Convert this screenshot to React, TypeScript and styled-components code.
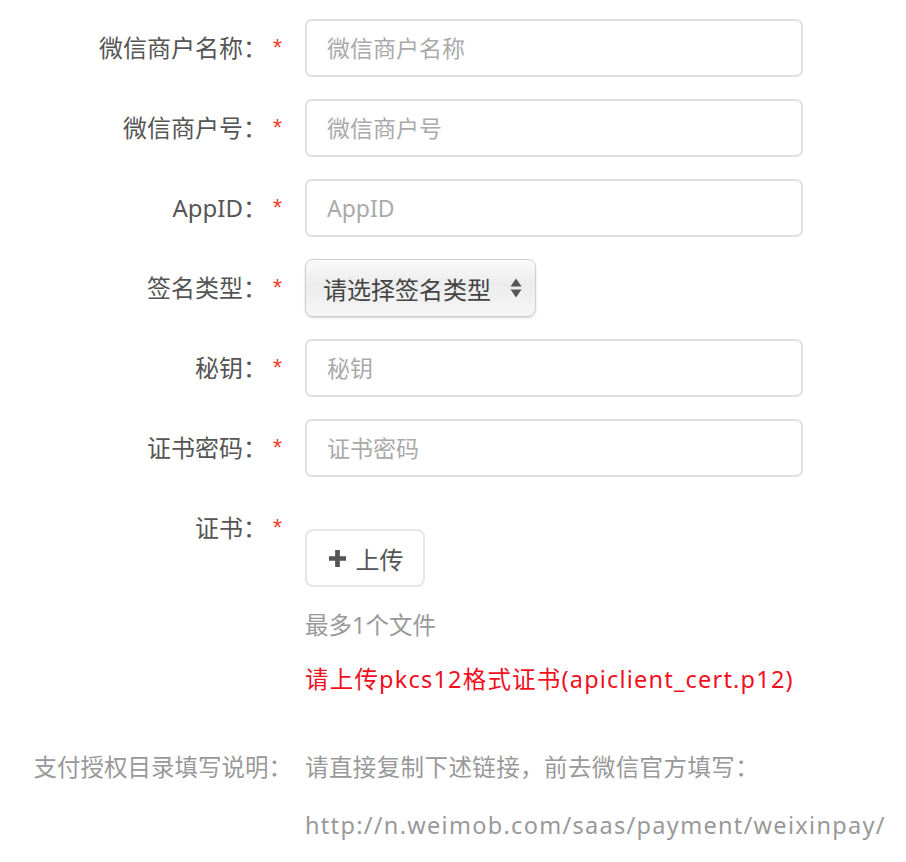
import React from 'react';
import styled, { createGlobalStyle } from 'styled-components';

const GlobalStyle = createGlobalStyle`
  html, body {
    margin: 0;
    padding: 0;
    background: #fff;
  }
  body {
    font-family: "Noto Sans", "Noto Sans CJK SC", sans-serif;
  }
`;

const Page = styled.div`
  width: 906px;
  padding-top: 19px;
  box-sizing: border-box;
`;

const Form = styled.div`
  display: flex;
  flex-direction: column;
  gap: 22px;
`;

const Row = styled.div`
  display: grid;
  grid-template-columns: 282px 498px;
  column-gap: 23px;
`;

const Label = styled.div`
  display: flex;
  justify-content: flex-end;
  align-items: flex-start;
  height: 58px;
  line-height: 58px;
  font-family: "Noto Sans", "Noto Sans CJK SC", sans-serif;
  font-size: 24px;
  color: #555;
  white-space: nowrap;
`;

const Required = styled.span`
  color: #f04134;
  width: 15px;
  text-align: right;
  font-family: "Liberation Sans", sans-serif;
  font-size: 24px;
`;

const TextInput = styled.input`
  box-sizing: border-box;
  width: 498px;
  height: 58px;
  border: 2px solid #e1e1e1;
  border-radius: 7px;
  padding: 0 20px;
  font-family: "Noto Sans", "Noto Sans CJK SC", sans-serif;
  font-size: 23px;
  color: #333;
  outline: none;

  &::placeholder {
    color: #aaa;
  }
`;

const SelectBox = styled.div`
  box-sizing: border-box;
  width: 231px;
  height: 58px;
  display: flex;
  align-items: center;
  justify-content: space-between;
  padding: 0 13px 0 17px;
  border: 1px solid #cfcfcf;
  border-radius: 8px;
  background: linear-gradient(#fafafa, #ececec 45%, #f6f6f6);
  box-shadow: 0 1px 2px rgba(0, 0, 0, 0.18), inset 0 1px 0 #fff;
  font-family: "Noto Sans CJK SC", sans-serif;
  font-size: 24px;
  color: #444;
`;

const Arrows = styled.svg`
  width: 12px;
  height: 24px;
`;

const UploadArea = styled.div`
  display: flex;
  flex-direction: column;
  align-items: flex-start;
  padding-top: 30px;
`;

const UploadButton = styled.button`
  box-sizing: border-box;
  width: 120px;
  height: 58px;
  display: flex;
  align-items: center;
  justify-content: center;
  gap: 10px;
  padding: 0 0 0 2px;
  border: 2px solid #e6e6e6;
  border-radius: 8px;
  background: #fff;
  font-family: "Noto Sans CJK SC", sans-serif;
  font-size: 24px;
  color: #555;
`;

const Hint = styled.div<{ $tone: 'muted' | 'error' }>`
  font-family: "Noto Sans", "Noto Sans CJK SC", sans-serif;
  font-size: 23.5px;
  line-height: 32px;
  white-space: nowrap;
  color: ${({ $tone }) => ($tone === 'error' ? '#f00f1e' : '#999')};
  letter-spacing: ${({ $tone }) => ($tone === 'error' ? '1.2px' : '0')};
  margin-top: ${({ $tone }) => ($tone === 'error' ? '22px' : '22px')};
`;

const Note = styled.div`
  display: grid;
  grid-template-columns: 292px 1fr;
  column-gap: 13px;
  row-gap: 27px;
  margin-top: 55px;
  font-family: "Noto Sans CJK SC", sans-serif;
  font-size: 23.5px;
  line-height: 32px;
  color: #999;
  white-space: nowrap;
`;

const NoteLabel = styled.div`
  text-align: right;
`;

const NoteText = styled.div`
  letter-spacing: 0.4px;
`;

const Link = styled.div`
  grid-column: 2;
  font-family: "Noto Sans", sans-serif;
  letter-spacing: 1.3px;
`;

const fields = [
  { label: '微信商户名称：', placeholder: '微信商户名称' },
  { label: '微信商户号：', placeholder: '微信商户号' },
  { label: 'AppID：', placeholder: 'AppID' },
];

export default function App() {
  return (
    <Page>
      <GlobalStyle />
      <Form>
        {fields.map((f) => (
          <Row key={f.label}>
            <Label>
              {f.label}
              <Required>*</Required>
            </Label>
            <TextInput placeholder={f.placeholder} />
          </Row>
        ))}
        <Row>
          <Label>
            签名类型：<Required>*</Required>
          </Label>
          <SelectBox>
            <span>请选择签名类型</span>
            <Arrows viewBox="0 0 12 24">
              <path d="M6 2.5 L11.5 10.5 L0.5 10.5 Z" fill="#555" />
              <path d="M6 21.5 L11.5 13.5 L0.5 13.5 Z" fill="#555" />
            </Arrows>
          </SelectBox>
        </Row>
        <Row>
          <Label>
            秘钥：<Required>*</Required>
          </Label>
          <TextInput placeholder="秘钥" />
        </Row>
        <Row>
          <Label>
            证书密码：<Required>*</Required>
          </Label>
          <TextInput placeholder="证书密码" />
        </Row>
        <Row>
          <Label>
            证书：<Required>*</Required>
          </Label>
          <UploadArea>
            <UploadButton>
              <svg width="17" height="17" viewBox="0 0 16 16">
                <path d="M5.8 0h4.4v5.8H16v4.4h-5.8V16H5.8v-5.8H0V5.8h5.8z" fill="#555" />
              </svg>
              上传
            </UploadButton>
            <Hint $tone="muted">最多1个文件</Hint>
            <Hint $tone="error">请上传pkcs12格式证书(apiclient_cert.p12)</Hint>
          </UploadArea>
        </Row>
      </Form>
      <Note>
        <NoteLabel>支付授权目录填写说明：</NoteLabel>
        <NoteText>请直接复制下述链接，前去微信官方填写：</NoteText>
        <Link>http://n.weimob.com/saas/payment/weixinpay/</Link>
      </Note>
    </Page>
  );
}
